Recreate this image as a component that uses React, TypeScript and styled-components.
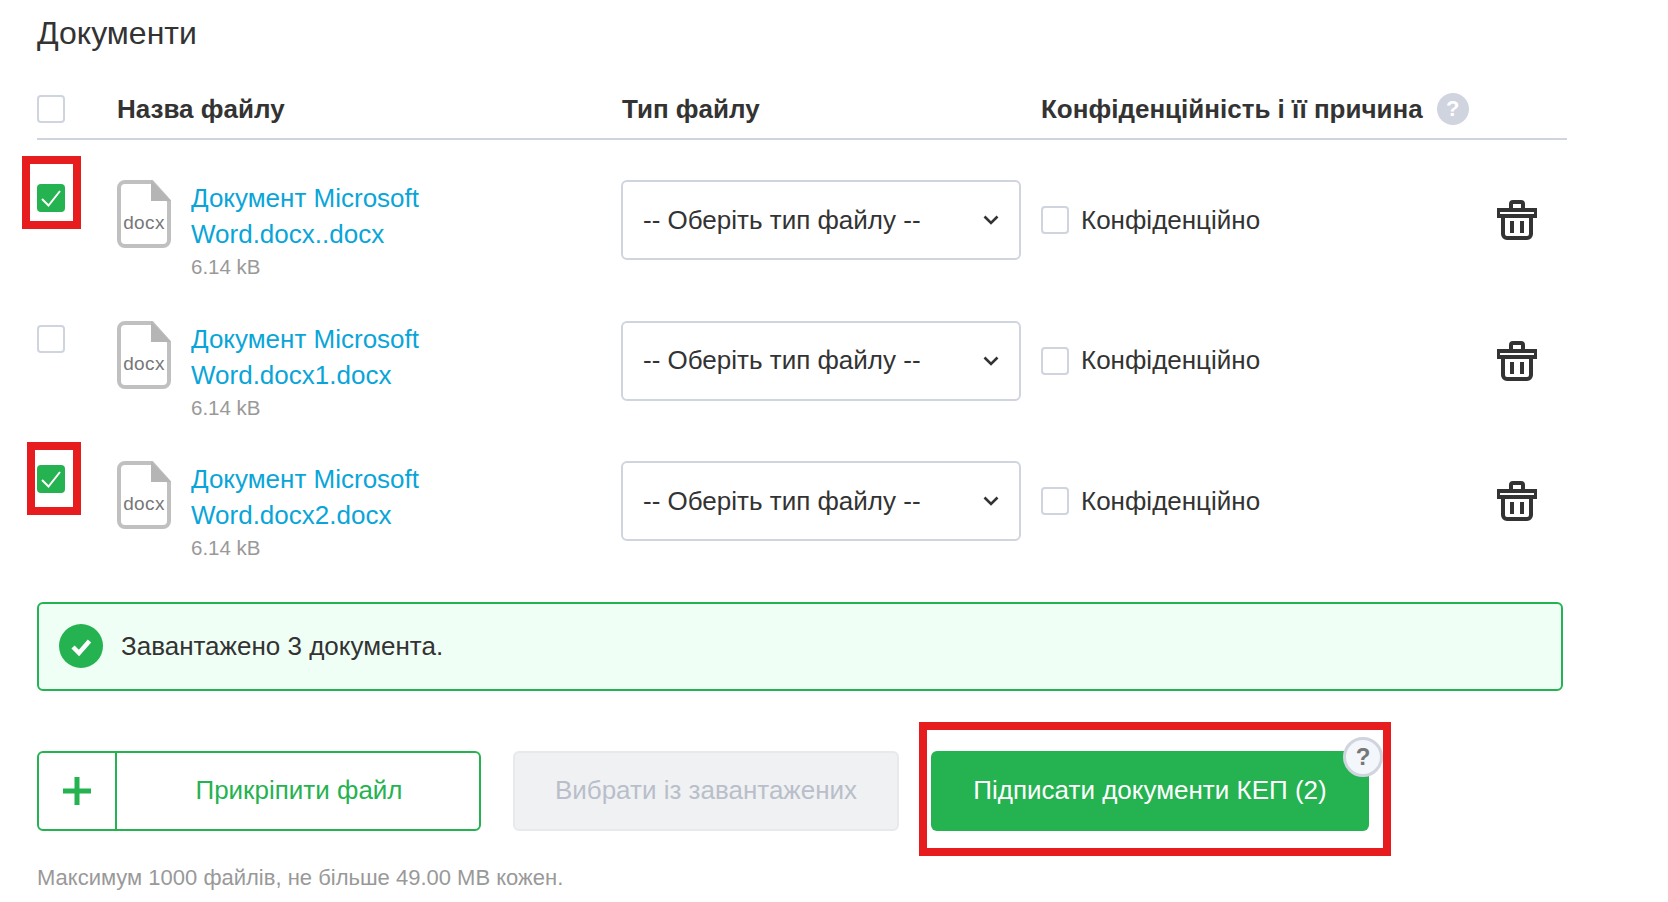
import React from 'react';
import styled, { createGlobalStyle } from 'styled-components';

const GlobalStyle = createGlobalStyle`
  html, body {
    margin: 0;
    background: #fff;
  }
  * {
    box-sizing: border-box;
  }
`;

const Page = styled.div`
  width: 1668px;
  height: 902px;
  padding: 0 0 0 37px;
  overflow: hidden;
  font-family: "Liberation Sans", Arial, sans-serif;
  font-size: 26px;
  color: #333;
`;

const Title = styled.h1`
  margin: 0;
  font-size: 32px;
  font-weight: 400;
  line-height: 66px;
`;

const TableHeader = styled.div`
  display: grid;
  grid-template-columns: 80px 505px 419px 1fr;
  align-items: center;
  width: 1530px;
  height: 74px;
  padding: 29px 0 15px;
  border-bottom: 2px solid #d0d4df;
  font-size: 26px;
  font-weight: 700;
  line-height: 28px;
`;

const HeaderCell = styled.div`
  display: flex;
  align-items: center;
  gap: 14px;
  height: 28px;
`;

const HelpDot = styled.span`
  display: flex;
  align-items: center;
  justify-content: center;
  width: 32px;
  height: 32px;
  border-radius: 50%;
  background: #d0d4df;
  color: #fff;
  font-size: 22px;
  font-weight: 700;
`;

const Row = styled.div`
  display: grid;
  grid-template-columns: 81px 503px 420px 1fr;
  align-items: start;
  width: 1529px;
  height: 140.5px;
  padding-top: 40.25px;
`;

const CheckCell = styled.div`
  position: relative;
  width: 28px;
  height: 28px;
  margin-top: 4px;
`;

const Box = styled.span<{ $checked?: boolean }>`
  display: flex;
  align-items: center;
  justify-content: center;
  width: 28px;
  height: 28px;
  flex: none;
  border-radius: 4px;
  border: ${(p) => (p.$checked ? 'none' : '2px solid #d0d4df')};
  background: ${(p) => (p.$checked ? '#25b250' : '#fff')};
`;

const RedMark = styled.span<{ $top: number; $right: number; $bottom: number; $left: number }>`
  position: absolute;
  top: ${(p) => p.$top}px;
  right: ${(p) => p.$right}px;
  bottom: ${(p) => p.$bottom}px;
  left: ${(p) => p.$left}px;
  border: 8px solid #e71c1f;
  pointer-events: none;
`;

const FileCell = styled.div`
  display: flex;
  gap: 20px;
  margin-left: -1px;
`;

const FileInfo = styled.div`
  padding-top: 0;
`;

const FileLink = styled.a`
  display: block;
  width: 300px;
  color: #0aa5d8;
  font-size: 26px;
  line-height: 36px;
  text-decoration: none;
`;

const FileSize = styled.div`
  color: #999;
  font-size: 20.5px;
  line-height: 30px;
`;

const TypeSelect = styled.div`
  display: flex;
  align-items: center;
  justify-content: space-between;
  width: 400px;
  height: 80px;
  padding: 0 20px;
  border: 2px solid #d0d4df;
  border-radius: 6px;
  background: #fff;
`;

const ConfCell = styled.div`
  display: flex;
  align-items: center;
  justify-content: space-between;
  height: 80px;
  padding-right: 29px;
`;

const ConfLabel = styled.label`
  display: flex;
  align-items: center;
  gap: 12px;
`;

const Alert = styled.div`
  display: flex;
  align-items: center;
  gap: 18px;
  width: 1526px;
  height: 89px;
  margin-top: 40px;
  padding-left: 20px;
  border: 2px solid #25b250;
  border-radius: 6px;
  background: #f0fff5;
`;

const Actions = styled.div`
  display: flex;
  gap: 32px;
  margin-top: 60px;
`;

const AttachButton = styled.div`
  display: flex;
  width: 444px;
  height: 80px;
  border: 2px solid #25b250;
  border-radius: 6px;
  color: #25b250;
`;

const AttachPlus = styled.span`
  display: flex;
  align-items: center;
  justify-content: center;
  width: 78px;
  border-right: 2px solid #25b250;
`;

const AttachLabel = styled.span`
  display: flex;
  align-items: center;
  justify-content: center;
  flex: 1;
  padding-left: 2px;
`;

const PickButton = styled.div`
  display: flex;
  align-items: center;
  justify-content: center;
  width: 386px;
  height: 80px;
  border: 2px solid #e8e9ec;
  border-radius: 6px;
  background: #f0f1f3;
  color: #b9bfca;
`;

const SignWrap = styled.div`
  position: relative;
`;

const SignButton = styled.div`
  display: flex;
  align-items: center;
  justify-content: center;
  width: 438px;
  height: 80px;
  border-radius: 6px;
  background: #25b250;
  color: #fff;
`;

const SignHelp = styled.span`
  position: absolute;
  top: -14px;
  right: -14px;
  display: flex;
  align-items: center;
  justify-content: center;
  width: 40px;
  height: 40px;
  border: 3px solid #d0d4df;
  border-radius: 50%;
  background: #f3f6fa;
  color: #777;
  font-size: 24px;
  font-weight: 700;
`;

const Note = styled.div`
  margin-top: 33px;
  color: #999;
  font-size: 22px;
  line-height: 28px;
`;

const TickIcon = () => (
  <svg width="22" height="20" viewBox="0 0 22 20" fill="none">
    <path d="M2 11l6.5 6.5L20 3" stroke="#fff" strokeWidth="2" />
  </svg>
);

const DocIcon = () => (
  <svg width="54" height="68" viewBox="0 0 54 68" style={{ flex: 'none' }}>
    <path
      d="M8 2H35L52 21V60a6 6 0 0 1-6 6H8a6 6 0 0 1-6-6V8a6 6 0 0 1 6-6z"
      fill="#fff"
      stroke="#c0c0c0"
      strokeWidth="4"
    />
    <path d="M34 0L54 21H34z" fill="#b5b5b5" />
    <text x="27" y="49" textAnchor="middle" fontFamily="Liberation Sans, Arial, sans-serif" fontSize="19" letterSpacing="0.4" fill="#777">
      docx
    </text>
  </svg>
);

const Chevron = () => (
  <svg width="16" height="10" viewBox="0 0 16 10" fill="none">
    <path d="M1.5 1.5L8 8l6.5-6.5" stroke="#333" strokeWidth="2.6" />
  </svg>
);

const TrashIcon = () => (
  <svg width="40" height="40" viewBox="0 0 40 40" fill="none">
    <path d="M14 9V4a2 2 0 0 1 2-2h8a2 2 0 0 1 2 2v5" stroke="#333" strokeWidth="4" />
    <rect x="0" y="8" width="40" height="10" fill="#333" />
    <rect x="3" y="12" width="34" height="2" fill="#fff" />
    <path d="M6 18V34a4 4 0 0 0 4 4H30a4 4 0 0 0 4-4V18" stroke="#333" strokeWidth="4" />
    <rect x="13" y="21" width="4" height="12" fill="#333" />
    <rect x="23" y="21" width="4" height="12" fill="#333" />
  </svg>
);

const SuccessIcon = () => (
  <svg width="44" height="44" viewBox="0 0 44 44" fill="none">
    <circle cx="22" cy="22" r="22" fill="#25b250" />
    <path d="M14 23l6 6 10.5-12" stroke="#fff" strokeWidth="4.5" />
  </svg>
);

const PlusIcon = () => (
  <svg width="28" height="28" viewBox="0 0 28 28">
    <path d="M11.5 0h5v11.5H28v5H16.5V28h-5V16.5H0v-5h11.5z" fill="#25b250" />
  </svg>
);

const files = [
  { name: 'Word.docx..docx', checked: true, mark: { $top: -28, $right: -16, $bottom: -17, $left: -15 } },
  { name: 'Word.docx1.docx', checked: false },
  { name: 'Word.docx2.docx', checked: true, mark: { $top: -23, $right: -16, $bottom: -22, $left: -10 } },
];

export default function App() {
  return (
    <Page>
      <GlobalStyle />
      <Title>Документи</Title>
      <TableHeader>
        <Box />
        <HeaderCell>Назва файлу</HeaderCell>
        <HeaderCell>Тип файлу</HeaderCell>
        <HeaderCell>
          Конфіденційність і її причина
          <HelpDot>?</HelpDot>
        </HeaderCell>
      </TableHeader>
      {files.map((file) => (
        <Row key={file.name}>
          <CheckCell>
            <Box $checked={file.checked}>{file.checked && <TickIcon />}</Box>
            {file.mark && <RedMark {...file.mark} />}
          </CheckCell>
          <FileCell>
            <DocIcon />
            <FileInfo>
              <FileLink href="#">
                Документ Microsoft
                <br />
                {file.name}
              </FileLink>
              <FileSize>6.14 kB</FileSize>
            </FileInfo>
          </FileCell>
          <TypeSelect>
            -- Оберіть тип файлу --
            <Chevron />
          </TypeSelect>
          <ConfCell>
            <ConfLabel>
              <Box />
              Конфіденційно
            </ConfLabel>
            <TrashIcon />
          </ConfCell>
        </Row>
      ))}
      <Alert>
        <SuccessIcon />
        Завантажено 3 документа.
      </Alert>
      <Actions>
        <AttachButton>
          <AttachPlus>
            <PlusIcon />
          </AttachPlus>
          <AttachLabel>Прикріпити файл</AttachLabel>
        </AttachButton>
        <PickButton>Вибрати із завантажених</PickButton>
        <SignWrap>
          <SignButton>Підписати документи КЕП (2)</SignButton>
          <SignHelp>?</SignHelp>
          <RedMark $top={-29} $right={-22} $bottom={-25} $left={-12} />
        </SignWrap>
      </Actions>
      <Note>Максимум 1000 файлів, не більше 49.00 MB кожен.</Note>
    </Page>
  );
}
